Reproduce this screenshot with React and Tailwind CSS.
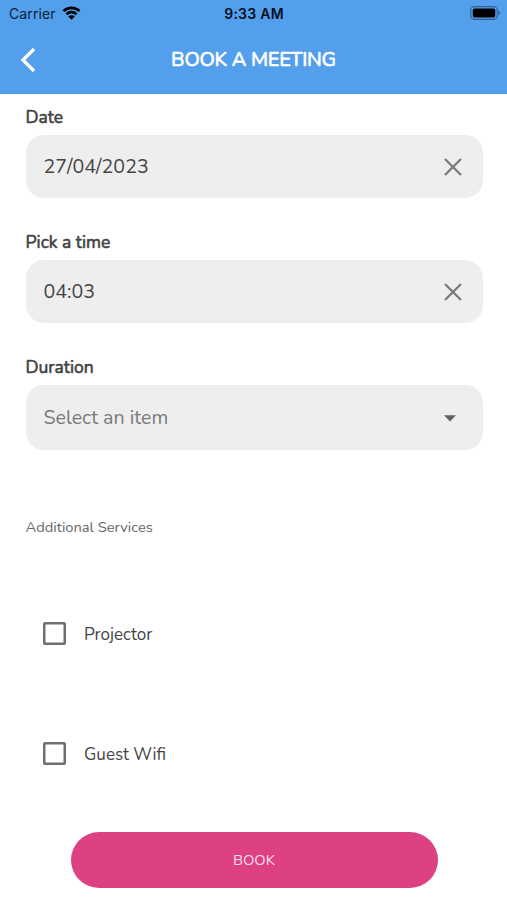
import React from "react";

function StatusBar() {
  return (
    <div className="flex h-[28px] items-center justify-between pl-[9px] pr-[6px] font-['Inter','Liberation_Sans',sans-serif] text-black">
      <div className="flex w-[100px] items-center gap-[6px]">
        <span className="text-[14px] leading-[28px] tracking-[0.1px] text-[#0d2238]">Carrier</span>
        <svg width="19" height="14" viewBox="0 0 20 15" fill="none" stroke="#000" strokeWidth="2.8" className="-mt-[2px]">
          <path d="M1.4 5.5a12.2 12.2 0 0 1 17.2 0" />
          <path d="M4.6 8.8a7.7 7.7 0 0 1 10.8 0" />
          <path d="M10 14.8 6.5 11.3a4.9 4.9 0 0 1 7 0z" fill="#000" stroke="none" />
        </svg>
      </div>
      <span className="-ml-[2px] text-[14px] font-semibold leading-[28px] tracking-[0.25px] text-[#04101c]">9:33 AM</span>
      <div className="flex w-[100px] justify-end">
        <svg width="31" height="14" viewBox="0 0 31 14" className="-mt-[2px]">
          <rect x="0.8" y="0.6" width="26.4" height="12.8" rx="3.6" fill="none" stroke="#31608f" strokeWidth="1.1" />
          <rect x="2.8" y="2.4" width="22.4" height="9.2" rx="1.8" fill="#000" />
          <path d="M28.4 4.6c2 .8 2 4 0 4.8z" fill="#31608f" />
        </svg>
      </div>
    </div>
  );
}

function ClearIcon() {
  return (
    <svg width="18" height="18" viewBox="0 0 18 18" fill="none" stroke="#7b7b7b" strokeWidth="2.3">
      <path d="M1 1l16 16M17 1L1 17" />
    </svg>
  );
}

function FieldLabel({ children }) {
  return (
    <label className="h-[30px] text-[17.5px] leading-[24px] text-[#444] [-webkit-text-stroke:0.6px_#444]">
      {children}
    </label>
  );
}

function Checkbox({ label }) {
  return (
    <div className="flex h-[24px] items-center gap-[18px] pl-[43px]">
      <span className="mb-px size-[23px] rounded-[2px] border-[2.5px] border-[#6f6f6f] shadow-[inset_0_0_0_0.5px_#6f6f6f]" />
      <span className="pt-px text-[17px] leading-[24px] text-[#444]">{label}</span>
    </div>
  );
}

export default function App() {
  return (
    <div className="flex h-[900px] w-[507px] flex-col overflow-hidden bg-white font-['Nunito','Lato','Open_Sans',sans-serif]">
      <header className="h-[94px] shrink-0 bg-[#539fec]">
        <StatusBar />
        <div className="flex h-[64px] items-center pl-[20px]">
          <svg width="16" height="24" viewBox="0 0 16 24" fill="none" stroke="#fff" strokeWidth="3.4" className="-mt-px">
            <path d="M14 1L3 12l11 11" />
          </svg>
          <h1 className="flex-1 pr-[36px] text-center text-[20px] leading-[24px] tracking-[-0.25px] text-white [-webkit-text-stroke:0.7px_#fff]">
            BOOK A MEETING
          </h1>
        </div>
      </header>

      <main className="flex flex-col">
        <section className="flex flex-col pl-[25.5px] pr-[24.5px] pt-[11px]">
          <FieldLabel>Date</FieldLabel>
          <div className="flex h-[63px] items-center justify-between rounded-[18px] bg-[#eee] pl-[18px] pr-[20.5px]">
            <span className="text-[19.6px] text-[#444]">27/04/2023</span>
            <ClearIcon />
          </div>
        </section>
        <section className="flex flex-col pl-[25.5px] pr-[24.5px] pt-[32px]">
          <FieldLabel>Pick a time</FieldLabel>
          <div className="flex h-[63px] items-center justify-between rounded-[18px] bg-[#eee] pl-[18px] pr-[20.5px]">
            <span className="text-[19.6px] text-[#444]">04:03</span>
            <ClearIcon />
          </div>
        </section>
        <section className="flex flex-col pl-[25.5px] pr-[24.5px] pt-[32px]">
          <FieldLabel>Duration</FieldLabel>
          <div className="flex h-[65px] items-center justify-between rounded-[18px] bg-[#eee] pl-[18px] pr-[27px]">
            <span className="text-[19.6px] text-[#7a7a7a]">Select an item</span>
            <svg width="12" height="7" viewBox="0 0 12 7" fill="#606060" className="mt-px">
              <path d="M0 0.3h12L6 6.5z" />
            </svg>
          </div>
        </section>
        <h2 className="mt-[66px] px-[25.5px] text-[14.7px] leading-[22px] text-[#666]">
          Additional Services
        </h2>
        <div className="mt-[84px] flex flex-col gap-[96px]">
          <Checkbox label="Projector" />
          <Checkbox label="Guest Wifi" />
        </div>
        <button className="ml-[70.5px] mt-[66px] h-[56px] w-[367px] rounded-full bg-[#de4183] text-[14.8px] text-[#fbdde9]">
          BOOK
        </button>
      </main>
    </div>
  );
}
